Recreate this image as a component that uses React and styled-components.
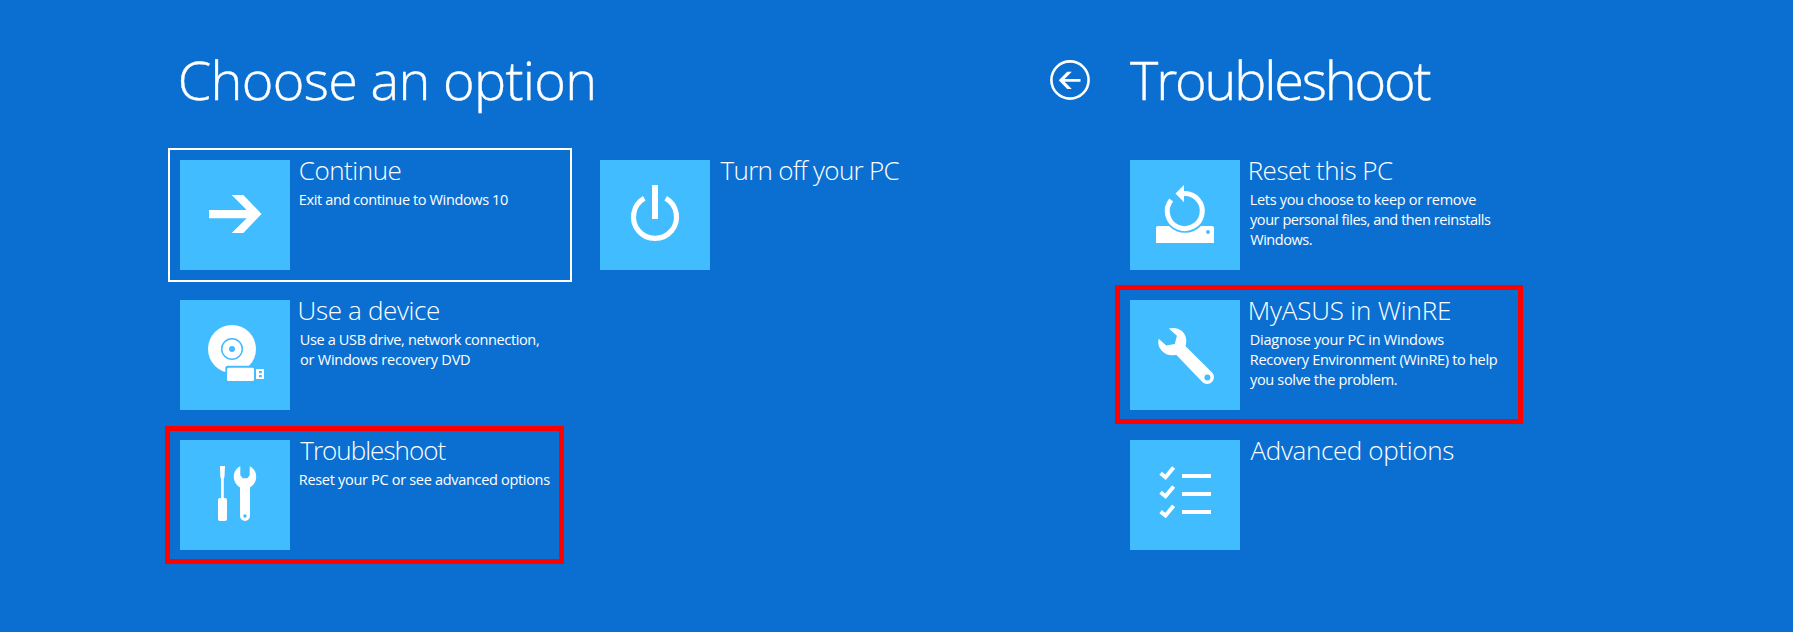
import React from "react";
import styled, { createGlobalStyle } from "styled-components";

const BLUE = "#0b6fd2";
const TILE = "#40bcff";
const INK = "#ffffff";

const GlobalStyle = createGlobalStyle`
  body {
    margin: 0;
    background: ${BLUE};
  }
`;

const Screen = styled.main`
  display: flex;
  box-sizing: border-box;
  width: 1793px;
  height: 632px;
  padding-top: 43px;
  overflow: hidden;
  background: ${BLUE};
  color: ${INK};
  font-family: "Open Sans", "Noto Sans", sans-serif;
`;

const Panel = styled.section`
  box-sizing: border-box;
  width: ${(p) => p.$width}px;
  padding-left: ${(p) => p.$inset}px;
`;

const PanelHeader = styled.header`
  display: flex;
  align-items: center;
  height: 74px;
  margin-bottom: 31px;
  padding-left: ${(p) => p.$indent}px;
`;

const Heading = styled.h1`
  margin: 0;
  padding-bottom: 2px;
  font-size: 54px;
  font-weight: 300;
  line-height: 72px;
  letter-spacing: ${(p) => p.$tracking}px;
  white-space: nowrap;
  -webkit-text-stroke: 0.4px ${INK};
`;

const BackButton = styled.button`
  display: flex;
  width: 40px;
  height: 40px;
  margin: 0 40px 0 0;
  padding: 0;
  border: 0;
  background: none;
  color: inherit;
`;

const OptionGrid = styled.div`
  display: grid;
  grid-template-columns: repeat(${(p) => p.$columns}, 404px);
  grid-auto-rows: 134px;
  gap: 6px 16px;
  padding-left: ${(p) => p.$indent || 0}px;
`;

const Option = styled.div`
  position: relative;
  display: flex;
  box-sizing: border-box;
  grid-column: ${(p) => (p.$startsRow ? "1" : "auto")};
  padding: 10px;
  border: 2px solid ${(p) => (p.$focused ? INK : "transparent")};
`;

const Highlight = styled.span`
  position: absolute;
  top: ${(p) => p.$top}px;
  left: -5px;
  box-sizing: border-box;
  width: ${(p) => p.$width}px;
  height: ${(p) => p.$height}px;
  border: 5px solid #ff0000;
`;

const Tile = styled.div`
  flex: none;
  width: 110px;
  height: 110px;
  background: ${TILE};
`;

const Glyph = styled.svg`
  display: block;
  width: 100%;
  height: 100%;
`;

const Copy = styled.div`
  padding-left: 8px;
  white-space: nowrap;
`;

const Title = styled.h2`
  margin: 0 0 10px;
  font-size: 26px;
  font-weight: 300;
  line-height: 20px;
  text-indent: ${(p) => p.$shift}px;
  letter-spacing: ${(p) => p.$tracking}px;
`;

const Line = styled.p`
  margin: 0;
  font-size: 14.5px;
  line-height: 20px;
  text-indent: ${(p) => p.$shift}px;
  letter-spacing: ${(p) => p.$tracking}px;
`;

const ContinueIcon = () => (
  <Glyph viewBox="0 0 110 110" fill={INK}>
    <path d="M29 50H66.7L51.7 35H63.3L81.5 53.9L63.3 73H51.7L66.7 58.2H29Z" />
  </Glyph>
);

const DeviceIcon = () => (
  <Glyph viewBox="0 0 110 110" fill={INK}>
    <circle cx="52" cy="49" r="24" />
    <circle cx="52" cy="49" r="10.3" fill="none" stroke={TILE} strokeWidth="1.5" />
    <circle cx="52" cy="49" r="3" fill={TILE} />
    <rect x="45.3" y="65.8" width="40" height="17" rx="2.5" fill={TILE} />
    <rect x="47" y="67.7" width="27" height="13.4" rx="1.5" />
    <path fillRule="evenodd" d="M76 69H84V79H76ZM79 71V73.3H81.8V71ZM79 75V77.3H81.8V75Z" />
  </Glyph>
);

const ToolsIcon = () => (
  <Glyph viewBox="0 0 110 110" fill={INK}>
    <path d="M40 26H45L44.5 36.5L43.8 39V58H45Q47 58 47 60V79Q47 81 45 81H40Q38 81 38 79V60Q38 58 40 58H41V39L40.3 36.5Z" />
    <path
      fillRule="evenodd"
      d="M60.3 26.2C56 28.3 53.8 32.3 53.8 36.8C53.8 41.5 56.3 45.3 60 47.5V76A5 5 0 0 0 70 76V47.5C73.7 45.3 76.2 41.5 76.2 36.8C76.2 32.3 74 28.3 69.7 26.2V35.3L67.3 38.3H62.7L60.3 35.3ZM65 74.3A1.7 1.7 0 1 1 65 77.7A1.7 1.7 0 1 1 65 74.3Z"
    />
  </Glyph>
);

const PowerIcon = () => (
  <Glyph viewBox="0 0 110 110" fill="none" stroke={INK}>
    <path d="M44.3 38.3A21.5 21.5 0 1 0 65.7 38.3" strokeWidth="5.2" />
    <path d="M55 25V59" strokeWidth="6" />
  </Glyph>
);

const ResetIcon = () => (
  <Glyph viewBox="0 0 110 110" fill={INK}>
    <path d="M26 68Q26 66 28 66H82Q84 66 84 68V83H26Z" />
    <circle cx="78" cy="72" r="1.9" fill={TILE} />
    <circle cx="55" cy="51" r="21.8" fill={TILE} />
    <path d="M53.5 33.6A17.5 17.5 0 1 1 41.2 40" fill="none" stroke={INK} strokeWidth="5" />
    <path d="M45.5 33.5L54 25V42.3Z" />
  </Glyph>
);

const WrenchIcon = () => (
  <Glyph viewBox="0 0 110 110" fill={INK}>
    <path
      fillRule="evenodd"
      d="M38.8 28.6C44 27 49.2 28.2 52.7 31.8C56.3 35.5 57 41 55.6 46.2L82.3 72.7A6.8 6.8 0 0 1 72.6 82.2L46.2 54.8C40.5 56.3 35.3 54.6 32 51C28.6 47.3 27.4 43.4 28.7 38.8L36.2 45.6L44.8 44L46.9 35.8ZM77.4 74.4A3 3 0 1 0 77.4 80.4A3 3 0 1 0 77.4 74.4Z"
    />
  </Glyph>
);

const ChecklistIcon = () => (
  <Glyph viewBox="0 0 110 110" fill="none" stroke={INK} strokeWidth="4">
    {[0, 19, 38.3].map((y) => (
      <path key={y} d={`M30.6 ${33.3 + y}L35.5 ${37.2 + y}L43.6 ${27.5 + y}`} />
    ))}
    <path d="M52 36H81M52 54H81M52 72H81" />
  </Glyph>
);

const BackIcon = () => (
  <Glyph viewBox="0 0 40 40">
    <circle cx="20" cy="20" r="18.6" fill="none" stroke={INK} strokeWidth="2.6" />
    <path fill={INK} d="M8.8 20.3L17.2 11.7H21.8L14.6 18.9H30.5V21.7H14.6L21.8 29H17.2Z" />
  </Glyph>
);

const mainOptions = [
  {
    icon: ContinueIcon,
    title: ["Continue", 0.8, -0.47],
    lines: [["Exit and continue to Windows 10", 0.8, -0.37]],
    focused: true,
  },
  { icon: PowerIcon, title: ["Turn off your PC", 2.6, -0.7], lines: [] },
  {
    icon: DeviceIcon,
    title: ["Use a device", -0.4, -0.35],
    lines: [
      ["Use a USB drive, network connection,", 1.8, -0.36],
      ["or Windows recovery DVD", 2, -0.23],
    ],
    startsRow: true,
  },
  {
    icon: ToolsIcon,
    title: ["Troubleshoot", 2.3, -0.98],
    lines: [["Reset your PC or see advanced options", 0.8, -0.31]],
    startsRow: true,
    highlight: { top: -4, width: 399, height: 138 },
  },
];

const troubleshootOptions = [
  {
    icon: ResetIcon,
    title: ["Reset this PC", -0.3, -0.53],
    lines: [
      ["Lets you choose to keep or remove", 1.7, -0.31],
      ["your personal files, and then reinstalls", 2, -0.43],
      ["Windows.", 2.2, -0.44],
    ],
  },
  {
    icon: WrenchIcon,
    title: ["MyASUS in WinRE", -0.3, -0.17],
    lines: [
      ["Diagnose your PC in Windows", 1.8, -0.25],
      ["Recovery Environment (WinRE) to help", 1.8, -0.3],
      ["you solve the problem.", 2, -0.33],
    ],
    highlight: { top: -5, width: 408, height: 139 },
  },
  { icon: ChecklistIcon, title: ["Advanced options", 2.5, -0.35], lines: [] },
];

function OptionCard({ icon: Icon, title, lines, focused, startsRow, highlight }) {
  const [label, shift, tracking] = title;
  return (
    <Option $focused={focused} $startsRow={startsRow}>
      <Tile>
        <Icon />
      </Tile>
      <Copy>
        <Title $shift={shift} $tracking={tracking}>
          {label}
        </Title>
        {lines.map(([text, lineShift, lineTracking]) => (
          <Line key={text} $shift={lineShift} $tracking={lineTracking}>
            {text}
          </Line>
        ))}
      </Copy>
      {highlight && (
        <Highlight $top={highlight.top} $width={highlight.width} $height={highlight.height} />
      )}
    </Option>
  );
}

export default function App() {
  return (
    <>
      <GlobalStyle />
      <Screen>
        <Panel $width={1050} $inset={168}>
          <PanelHeader $indent={9.8}>
            <Heading $tracking={-0.69}>Choose an option</Heading>
          </PanelHeader>
          <OptionGrid $columns={2}>
            {mainOptions.map((option) => (
              <OptionCard key={option.title[0]} {...option} />
            ))}
          </OptionGrid>
        </Panel>
        <Panel $width={743} $inset={0}>
          <PanelHeader $indent={0}>
            <BackButton aria-label="Back">
              <BackIcon />
            </BackButton>
            <Heading $tracking={-2.15}>Troubleshoot</Heading>
          </PanelHeader>
          <OptionGrid $columns={1} $indent={68}>
            {troubleshootOptions.map((option) => (
              <OptionCard key={option.title[0]} {...option} />
            ))}
          </OptionGrid>
        </Panel>
      </Screen>
    </>
  );
}
